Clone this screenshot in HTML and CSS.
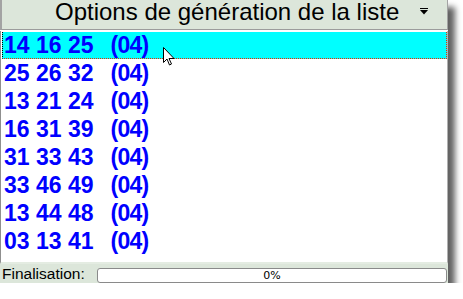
FILE: index.html
```html
<!DOCTYPE html>
<html lang="fr">
<head>
<meta charset="utf-8">
<link rel="stylesheet" href="styles.css">
</head>
<body>
<div class="window">
  <div class="header">
    <span class="title">Options de génération de la liste</span>
    <svg class="drop" width="8" height="7" viewBox="0 0 8 7"><rect x="0" y="0" width="8" height="1" fill="#000"/><polygon points="0,2 8,2 4,6.5" fill="#000"/></svg>
  </div>
  <div class="list">
    <div class="row selected">14 16 25<span class="count">(04)</span></div>
    <div class="row">25 26 32<span class="count">(04)</span></div>
    <div class="row">13 21 24<span class="count">(04)</span></div>
    <div class="row">16 31 39<span class="count">(04)</span></div>
    <div class="row">31 33 43<span class="count">(04)</span></div>
    <div class="row">33 46 49<span class="count">(04)</span></div>
    <div class="row">13 44 48<span class="count">(04)</span></div>
    <div class="row">03 13 41<span class="count">(04)</span></div>
  </div>
  <div class="footer">
    <span class="label">Finalisation:</span>
    <div class="progress">0%</div>
  </div>
  <svg class="cursor" width="12" height="20" viewBox="0 0 12 20"><path d="M0.5 0.5 L0.5 15.5 L4 12 L6.5 18 L8.5 17 L6 11.5 L11 11.5 Z" fill="#fff" stroke="#000" stroke-width="1" stroke-linejoin="miter"/></svg>
</div>
</body>
</html>
```
FILE: styles.css
```css
html, body {
  margin: 0;
  padding: 0;
  background: #ffffff;
}
.window {
  position: relative;
  width: 448px;
  height: 283px;
  display: flex;
  flex-direction: column;
  background: #ffffff;
  box-shadow: 7px 7px 6px rgba(0, 0, 0, 0.62);
  font-family: "Liberation Sans", Arial, sans-serif;
}
.header {
  flex: none;
  display: flex;
  align-items: center;
  background: #dce6da;
  border-left: 2px solid #a3a3a3;
  border-right: 1px solid #a3a3a3;
  border-bottom: 1px solid #9c9c9c;
  box-sizing: border-box;
  height: 30px;
  padding-left: 53px;
}
.title {
  font-size: 24px;
  color: #000;
  flex: 1;
  line-height: 24px;
  padding-bottom: 5px;
  white-space: nowrap;
}
.drop {
  margin-right: 19px;
  margin-bottom: 6px;
}
.list {
  flex: 1;
  margin-top: 1px;
  border-left: 1px solid #8f8f8f;
  border-right: 1px solid #b0b0b0;
  border-bottom: 2px solid #e4ece2;
  padding-left: 1px;
}
.row {
  height: 28px;
  line-height: 28px;
  font-size: 23px;
  font-weight: bold;
  color: #0000ff;
  white-space: pre;
  padding-left: 2px;
  box-sizing: border-box;
}
.count {
  margin-left: 17px;
  letter-spacing: -0.75px;
}
.row.selected {
  background: #00ffff;
  border-left: 1px dotted #000;
  border-right: 1px dotted #e03000;
  border-bottom: 1px dotted #e03000;
  margin-top: 1px;
  height: 27px;
  padding-left: 1px;
  line-height: 26px;
}
.footer {
  height: 19px;
  flex: none;
  display: flex;
  align-items: center;
  background: #dce6da;
  padding-left: 2px;
}
.label {
  font-size: 15.5px;
  color: #000;
  width: 95px;
  line-height: 1;
  padding-top: 1px;
}
.progress {
  flex: 1;
  height: 15px;
  margin-top: 3px;
  margin-right: 1px;
  box-sizing: border-box;
  border: 1px solid #8a8a8a;
  border-radius: 3px;
  background: #fff;
  font-family: "DejaVu Sans", Tahoma, sans-serif;
  font-size: 11px;
  line-height: 13px;
  text-align: center;
  color: #000;
}
.cursor {
  position: absolute;
  left: 163px;
  top: 47px;
}
```
